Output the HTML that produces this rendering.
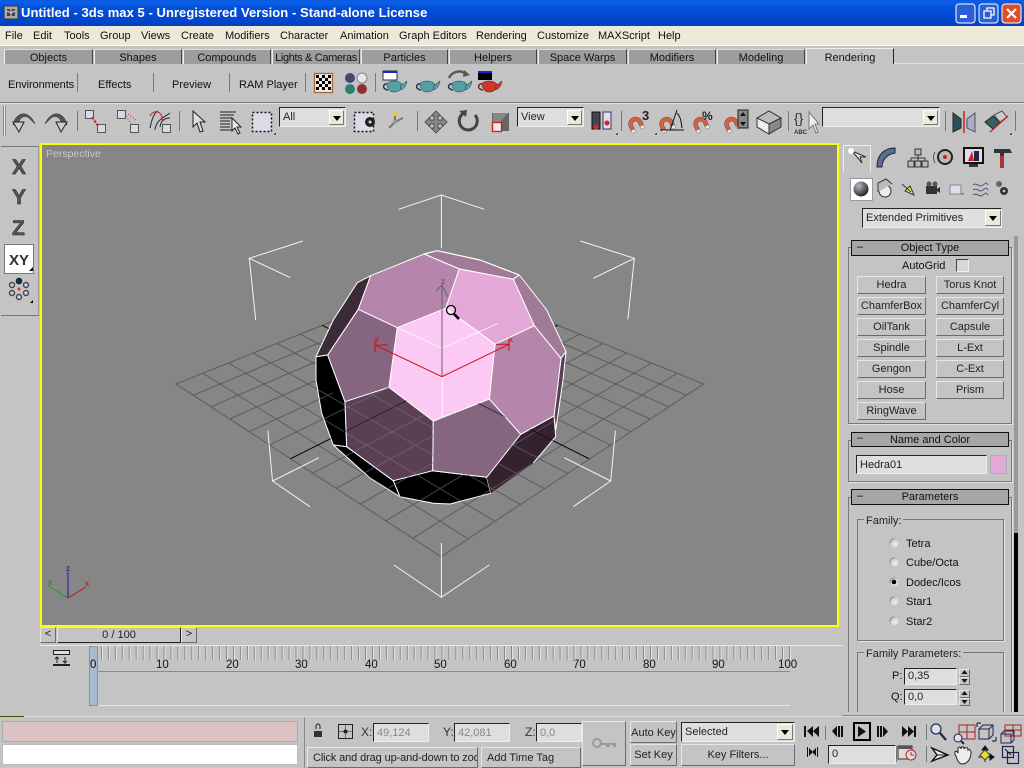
<!DOCTYPE html>
<html><head><meta charset="utf-8"><title>3ds max 5</title>
<style>
html,body{margin:0;padding:0;background:#c4c4c4}
#r{position:relative;width:1024px;height:768px;overflow:hidden;background:#c4c4c4;font:11px/14px "Liberation Sans",sans-serif;color:#111}
#r div,#r span.t{position:absolute;box-sizing:border-box;white-space:nowrap}
svg{position:absolute;left:0;top:0}
.b{background:#c4c4c4;border:1px solid;border-color:#e6e6e6 #6a6a6a #6a6a6a #e6e6e6;text-align:center;line-height:17px;color:#222}
.i{background:#dedede;border:1px solid;border-color:#222 #eee #eee #222;padding-left:3px;line-height:18px;color:#222}
.h{background:#a6a6a6;border:1px solid #111;text-align:center;line-height:15px;color:#111}
.g{border:1px solid #777;box-shadow:1px 1px 0 #e4e4e4}
.a{background:#ece9d8;border:1px solid;border-color:#fff #777 #777 #fff}
.a:after{content:"";position:absolute;left:3px;top:5px;border:4px solid transparent;border-top:5px solid #000;border-bottom:0}
.tab{background:#9d9d9d;height:15px;top:49px;text-align:center;line-height:16px;border-left:1px solid #eee;border-top:1px solid #ddd;border-right:1px solid #444;color:#111}
.lab{background:#c4c4c4;padding:0 2px;color:#222}
</style></head><body><div id="r">

<div style="left:0;top:0;width:1024px;height:26px;background:linear-gradient(#0a5ae0 0,#0a5fe8 8%,#0450d8 30%,#0348cf 70%,#0440c0 100%)"></div>
<div style="left:21px;top:5px;color:#fff;font:bold 13px/16px 'Liberation Sans',sans-serif;letter-spacing:.05px">Untitled - 3ds max 5 - Unregistered Version - Stand-alone License</div>
<div style="left:0;top:26px;width:1024px;height:20px;background:#ece9d8;border-bottom:1px solid #fff"></div>
<div style="left:5px;top:29px">File</div><div style="left:33px;top:29px">Edit</div><div style="left:64px;top:29px">Tools</div><div style="left:100px;top:29px">Group</div><div style="left:141px;top:29px">Views</div><div style="left:181px;top:29px">Create</div><div style="left:225px;top:29px">Modifiers</div><div style="left:280px;top:29px">Character</div><div style="left:340px;top:29px">Animation</div><div style="left:399px;top:29px">Graph Editors</div><div style="left:476px;top:29px">Rendering</div><div style="left:537px;top:29px">Customize</div><div style="left:598px;top:29px">MAXScript</div><div style="left:658px;top:29px">Help</div>

<div class="tab" style="left:4px;width:89px">Objects</div><div class="tab" style="left:94px;width:88px">Shapes</div><div class="tab" style="left:183px;width:88px">Compounds</div><div class="tab" style="left:272px;width:88px;letter-spacing:-.35px">Lights &amp; Cameras</div><div class="tab" style="left:361px;width:87px">Particles</div><div class="tab" style="left:449px;width:88px">Helpers</div><div class="tab" style="left:538px;width:89px">Space Warps</div><div class="tab" style="left:628px;width:88px">Modifiers</div><div class="tab" style="left:717px;width:88px">Modeling</div>
<div style="left:806px;top:48px;width:88px;height:16px;text-align:center;line-height:18px;border-left:1px solid #eee;border-top:1px solid #eee;border-right:1px solid #222;background:#c4c4c4">Rendering</div>
<div style="left:894px;top:63px;width:130px;height:1px;background:#e4e4e4"></div>

<div style="left:8px;top:78px;letter-spacing:-.1px">Environments</div><div style="left:98px;top:78px">Effects</div><div style="left:172px;top:78px">Preview</div><div style="left:239px;top:78px">RAM Player</div>
<div style="left:0;top:102px;width:1024px;height:1px;background:#777"></div>
<div style="left:0;top:103px;width:1024px;height:1px;background:#e2e2e2"></div>

<div class="i" style="left:279px;top:107px;width:67px;height:20px">All</div><div class="a" style="left:329px;top:110px;width:15px;height:15px"></div>
<div class="i" style="left:517px;top:107px;width:67px;height:20px">View</div><div class="a" style="left:567px;top:110px;width:15px;height:15px"></div>
<div class="i" style="left:822px;top:107px;width:118px;height:20px"></div><div class="a" style="left:923px;top:110px;width:15px;height:15px"></div>

<!-- left toolbar -->
<div style="left:1px;top:146px;width:38px;height:170px;border-top:1px solid #777;border-bottom:1px solid #777;border-right:1px solid #999"></div>
<div style="left:4px;top:244px;width:30px;height:30px;background:#fff;border:1px solid #777"></div>

<!-- viewport -->
<div style="left:40px;top:143px;width:799px;height:484px;background:#868686;border:2px solid #ffff00"></div>
<div style="left:46px;top:147px;color:#c8c8c8;font-size:10.5px">Perspective</div>

<!-- right panel -->
<div style="left:843px;top:145px;width:28px;height:27px;border:1px solid #eee;border-bottom:0;background:#c4c4c4"></div>
<div style="left:850px;top:178px;width:23px;height:23px;background:#fff;border:1px solid #999"></div>
<div class="i" style="left:862px;top:208px;width:140px;height:20px;background:#dedede;line-height:18px">Extended Primitives</div><div class="a" style="left:985px;top:210px;width:16px;height:16px"></div>

<div class="g" style="left:848px;top:247px;width:164px;height:177px"></div>
<div class="h" style="left:851px;top:240px;width:158px;height:16px">Object Type</div>
<div style="left:857px;top:241px;line-height:13px">&#8211;</div>
<div style="left:902px;top:259px">AutoGrid</div>
<div style="left:956px;top:259px;width:13px;height:13px;background:#d6d6d6;border:1px solid;border-color:#444 #eee #eee #444"></div>

<div class="b" style="left:857px;top:276px;width:69px;height:18px">Hedra</div><div class="b" style="left:936px;top:276px;width:68px;height:18px">Torus Knot</div>
<div class="b" style="left:857px;top:297px;width:69px;height:18px">ChamferBox</div><div class="b" style="left:936px;top:297px;width:68px;height:18px">ChamferCyl</div>
<div class="b" style="left:857px;top:318px;width:69px;height:18px">OilTank</div><div class="b" style="left:936px;top:318px;width:68px;height:18px">Capsule</div>
<div class="b" style="left:857px;top:339px;width:69px;height:18px">Spindle</div><div class="b" style="left:936px;top:339px;width:68px;height:18px">L-Ext</div>
<div class="b" style="left:857px;top:360px;width:69px;height:18px">Gengon</div><div class="b" style="left:936px;top:360px;width:68px;height:18px">C-Ext</div>
<div class="b" style="left:857px;top:381px;width:69px;height:18px">Hose</div><div class="b" style="left:936px;top:381px;width:68px;height:18px">Prism</div>
<div class="b" style="left:857px;top:402px;width:69px;height:18px">RingWave</div>

<div class="g" style="left:848px;top:440px;width:164px;height:42px"></div>
<div class="h" style="left:851px;top:432px;width:158px;height:15px;line-height:14px">Name and Color</div>
<div style="left:857px;top:432px;line-height:13px">&#8211;</div>
<div class="i" style="left:856px;top:455px;width:131px;height:19px">Hedra01</div>
<div style="left:990px;top:455px;width:17px;height:19px;background:#e4a8d8;border:1px solid #b0b0b0"></div>

<div class="g" style="left:848px;top:497px;width:164px;height:240px"></div>
<div class="h" style="left:851px;top:489px;width:158px;height:16px">Parameters</div>
<div style="left:857px;top:490px;line-height:13px">&#8211;</div>
<div class="g" style="left:857px;top:519px;width:147px;height:122px"></div>
<div class="lab" style="left:864px;top:514px">Family:</div>
<div style="left:906px;top:537px">Tetra</div><div style="left:906px;top:556px">Cube/Octa</div><div style="left:906px;top:576px">Dodec/Icos</div><div style="left:906px;top:595px">Star1</div><div style="left:906px;top:615px">Star2</div>
<div class="g" style="left:857px;top:652px;width:147px;height:80px"></div>
<div class="lab" style="left:864px;top:647px">Family Parameters:</div>
<div style="left:892px;top:669px">P:</div><div class="i" style="left:904px;top:668px;width:53px;height:17px;line-height:15px">0,35</div>
<div style="left:891px;top:690px">Q:</div><div class="i" style="left:904px;top:689px;width:53px;height:16px;line-height:15px">0,0</div>
<div class="b" style="left:959px;top:669px;width:11px;height:8px"></div><div class="b" style="left:959px;top:677px;width:11px;height:8px"></div>
<div class="b" style="left:959px;top:690px;width:11px;height:8px"></div><div class="b" style="left:959px;top:698px;width:11px;height:8px"></div>
<div style="left:1014px;top:236px;width:4px;height:297px;background:#999"></div>
<div style="left:1014px;top:533px;width:4px;height:179px;background:#000"></div>
<div style="left:843px;top:712px;width:181px;height:60px;background:#c4c4c4"></div>
<div style="left:842px;top:715px;width:182px;height:1px;background:#888"></div>

<!-- time slider -->
<div class="b" style="left:40px;top:627px;width:16px;height:16px;line-height:13px">&lt;</div>
<div class="b" style="left:57px;top:627px;width:124px;height:16px;border-right-color:#222;border-bottom-color:#222;line-height:15px">0 / 100</div>
<div class="b" style="left:181px;top:627px;width:16px;height:16px;line-height:13px">&gt;</div>
<div style="left:40px;top:645px;width:803px;height:1px;background:#e8e8e8"></div>
<div style="left:0;top:716px;width:1024px;height:1px;background:#d8d8d8"></div>
<div style="left:98px;top:671px;width:692px;height:1px;background:#8a8a8a"></div>
<div style="left:98px;top:705px;width:692px;height:1px;background:#e4e4e4"></div>
<div style="left:89px;top:646px;width:9px;height:60px;background:#a9bccd;border:1px solid #8a9098"></div>
<div style="left:90px;top:658px;font-size:11.5px">0</div>
<div style="left:156px;top:658px;font-size:11.5px">10</div><div style="left:226px;top:658px;font-size:11.5px">20</div><div style="left:295px;top:658px;font-size:11.5px">30</div><div style="left:365px;top:658px;font-size:11.5px">40</div><div style="left:434px;top:658px;font-size:11.5px">50</div><div style="left:504px;top:658px;font-size:11.5px">60</div><div style="left:573px;top:658px;font-size:11.5px">70</div><div style="left:643px;top:658px;font-size:11.5px">80</div><div style="left:712px;top:658px;font-size:11.5px">90</div><div style="left:778px;top:658px;font-size:11.5px">100</div>

<!-- status -->
<div style="left:0;top:716px;width:24px;height:1px;background:#3c5c00"></div>
<div style="left:2px;top:721px;width:296px;height:21px;background:#dcc3c3;border:1px solid #aaa"></div>
<div style="left:2px;top:744px;width:296px;height:21px;background:#fff;border:1px solid #bbb"></div>
<div style="left:304px;top:717px;width:1px;height:51px;background:#888"></div>
<div style="left:361px;top:725px;font-size:12px;color:#333">X:</div><div class="i" style="left:373px;top:723px;width:56px;height:19px;color:#888">49,124</div>
<div style="left:443px;top:725px;font-size:12px;color:#333">Y:</div><div class="i" style="left:454px;top:723px;width:56px;height:19px;color:#888">42,081</div>
<div style="left:525px;top:725px;font-size:12px;color:#333">Z:</div><div class="i" style="left:536px;top:723px;width:46px;height:19px;color:#888">0,0</div>
<div class="b" style="left:307px;top:747px;width:171px;height:21px;line-height:20px;text-align:left;padding-left:5px;overflow:hidden;letter-spacing:-.12px">Click and drag up-and-down to zoo</div>
<div class="b" style="left:481px;top:747px;width:100px;height:21px;line-height:20px;text-align:left;padding-left:5px">Add Time Tag</div>
<div class="b" style="left:582px;top:721px;width:44px;height:45px"></div>
<div class="b" style="left:630px;top:721px;width:47px;height:22px;line-height:22px">Auto Key</div>
<div class="b" style="left:630px;top:744px;width:47px;height:22px;line-height:21px">Set Key</div>
<div class="i" style="left:681px;top:722px;width:114px;height:20px;line-height:18px">Selected</div><div class="a" style="left:777px;top:724px;width:16px;height:16px"></div>
<div class="b" style="left:681px;top:744px;width:114px;height:22px;line-height:21px">Key Filters...</div>
<div class="i" style="left:828px;top:745px;width:68px;height:19px;line-height:17px">0</div>
<div style="left:853px;top:722px;width:18px;height:19px;border:2px solid #000"></div>

<svg width="1024" height="768" viewBox="0 0 1024 768">
<defs>
<g id="tp"><path d="M-7-2C-8-5-2-6 0-6S8-5 8-2C8 3 4 5 0 5S-6 3-7-2Z"/><path d="M7-2C10-3 11-5 13-6 12-2 11 2 6 3Z"/><path d="M-7-3C-10-4-11 0-10 1-8 3-7 3-6 3" fill="none" stroke-width="1.4"/></g>
<g id="mag"><path d="M-7 3V-1A7 7 0 0 1 7-1V3H3V-1A3 3 0 0 0-3-1V3Z" fill="#d8603c" stroke="#555" stroke-width=".5"/><path d="M-7 3h4v3h-4zM3 3h4v3H3z" fill="#eee" stroke="#666" stroke-width=".4"/></g>
<pattern id="tk" x="94" y="646" width="6.95" height="14" patternUnits="userSpaceOnUse"><path d="M.5 0V14" stroke="#888"/><path d="M1.5 0V14" stroke="#e4e4e4"/></pattern>
<radialGradient id="rd" cx=".65" cy=".65" r=".7"><stop offset="0" stop-color="#f0f0f0"/><stop offset=".7" stop-color="#d0d0d0"/><stop offset="1" stop-color="#777"/></radialGradient>
<radialGradient id="sp" cx=".35" cy=".3" r=".8"><stop offset="0" stop-color="#bbb"/><stop offset=".6" stop-color="#556"/><stop offset="1" stop-color="#111"/></radialGradient>
<clipPath id="lower"><path d="M316 380 345 402 389 387 433 421 489 399 521 434 554 416 556 437 533 463 491 493 450 504 433 503 400 497 370 478 333 445 322 413Z"/></clipPath>
<g id="grid" fill="none">
<path d="M193.200 395.200L458 285.200M211.100 406.800L476.600 292.700M229.700 419L495.900 300.500M249.100 431.700L515.800 308.400M269.400 444.900L536.400 316.700M312.800 473.200L579.900 334.200M336.100 488.300L602.900 343.400M360.400 504.100L626.700 353M385.900 520.800L651.500 362.900M412.700 538.300L677.200 373.200"/>
<path d="M202.800 373.200L467.300 538.300M228.500 362.900L494.100 520.800M253.300 353L519.600 504.100M277.100 343.400L543.900 488.300M300.100 334.200L567.200 473.200M343.600 316.700L610.600 444.900M364.200 308.400L630.900 431.700M384.100 300.500L650.300 419M403.400 292.700L668.900 406.800M422 285.200L686.800 395.200"/>
</g>
</defs>

<!-- window buttons -->
<g stroke="#fff"><rect x="956" y="4" width="19" height="19" rx="3" fill="#2b5fd8"/><rect x="979" y="4" width="19" height="19" rx="3" fill="#2b5fd8"/><rect x="1002" y="4" width="19" height="19" rx="3" fill="#d9502a"/></g>
<rect x="960" y="15" width="7" height="3" fill="#fff"/><path d="M984 11h7v7h-7zM987 11V8h7v7h-3" fill="none" stroke="#fff" stroke-width="1.3"/><path d="M1007 9l9 9M1016 9l-9 9" stroke="#fff" stroke-width="2.2"/>
<rect x="4" y="6" width="14" height="13" fill="#aaa" stroke="#333"/><path d="M7 9h8v7H7z" fill="#444"/><path d="M11 9v7M7 11l4 2 4-2" stroke="#ddd" fill="none"/>

<!-- separators -->
<path d="M77.500 73V92M153.500 73V92M229.500 73V92M305.500 73V92M375.500 73V92M77.500 111V131M179.500 111V131M417.500 111V131M621.500 111V131M788.500 111V131M945.500 111V131M1015.500 111V131" stroke="#777"/>
<path d="M3.500 106V136M5.500 106V136" stroke="#888"/><path d="M4.500 106V136" stroke="#eee"/>

<!-- render toolbar -->
<rect x="314.500" y="73.500" width="18" height="19" fill="#eee" stroke="#a5682a" stroke-width="1.3"/>
<path d="M316 75h3v3h-3zM322 75h3v3h-3zM328 75h3v3h-3zM319 78h3v3h-3zM325 78h3v3h-3zM316 81h3v3h-3zM322 81h3v3h-3zM328 81h3v3h-3zM319 84h3v3h-3zM325 84h3v3h-3zM316 87h3v3h-3zM322 87h3v3h-3zM328 87h3v3h-3z" fill="#000"/>
<circle cx="350" cy="78" r="5" fill="#42486e"/><circle cx="362" cy="78" r="5" fill="#e8e8e8" stroke="#888"/><circle cx="350" cy="89" r="5" fill="#2f7f70"/><circle cx="362" cy="89" r="5" fill="#902f2f"/>
<g fill="#55a0a8" stroke="#234"  stroke-width=".5"><use href="#tp" x="394" y="87"/><use href="#tp" x="427" y="87"/><use href="#tp" x="459" y="87"/></g>
<use href="#tp" x="489" y="87" fill="#c8382c" stroke="#622" stroke-width=".5"/>
<rect x="383" y="71" width="14" height="9" fill="#fff" stroke="#333"/><rect x="383" y="71" width="14" height="2" fill="#2222cc"/>
<rect x="478" y="71" width="14" height="9" fill="#000"/><rect x="478" y="71" width="14" height="2" fill="#2222cc"/>
<path d="M449 78A11 11 0 0 1 466 74" fill="none" stroke="#555" stroke-width="2.4"/><path d="M464 70l6 5-7 2z" fill="#555"/>

<!-- main toolbar -->
<path d="M13 125C15 113 28 108 35 124L30 119C25 114 20 117 18 124Z" fill="#555" stroke="#222" stroke-width=".5"/><path d="M13 122 19 132 24 122Z" fill="#ccc" stroke="#222"/>
<path d="M67 125C65 113 52 108 45 124L50 119C55 114 60 117 62 124Z" fill="#555" stroke="#222" stroke-width=".5"/><path d="M67 122 61 132 56 122Z" fill="#ccc" stroke="#222"/>
<g fill="#d8d8e8" stroke="#555"><rect x="85.500" y="110.500" width="8" height="8"/><rect x="97.500" y="124.500" width="8" height="8"/><rect x="117.500" y="110.500" width="8" height="8"/><rect x="130.500" y="124.500" width="8" height="8"/><rect x="162.500" y="124.500" width="8" height="8"/></g>
<path d="M92 117l6 9" stroke="#b33" stroke-width="2" stroke-dasharray="3 1"/><path d="M126 116l6 9M128 114l8 6" stroke="#b33" stroke-dasharray="1 2"/>
<path d="M150 128C152 118 155 112 158 111M155 130C156 120 163 118 170 113M160 127C161 120 165 118 170 118" fill="none" stroke="#224"/><path d="M150 116C154 108 164 112 162 122" fill="none" stroke="#c22"/>
<path d="M193 111V127L197 123 200 132 203 131 200 122H205Z" fill="#ddd" stroke="#222"/>
<path d="M220 112H236M220 115H234M220 118H232M220 121H230M220 124H230M220 127H230M220 130H232" stroke="#222"/><path d="M232 118V131L235 128 238 134 240 133 237 127H241Z" fill="#eee" stroke="#222"/>
<rect x="252.500" y="112.500" width="19" height="19" fill="#dcdce8" stroke="#111" stroke-width="1.500" stroke-dasharray="2 2"/>
<rect x="354.500" y="112.500" width="19" height="19" fill="#dcdce8" stroke="#111" stroke-width="1.500" stroke-dasharray="2 2"/><circle cx="370" cy="122" r="5" fill="#222"/><circle cx="370" cy="122" r="1.500" fill="#ddd"/>
<path d="M395 122 389 128M395 122 403 118M395 122V114" stroke="#777" stroke-width="2"/><circle cx="395" cy="114" r="2" fill="#e8d020"/><circle cx="395" cy="122" r="2" fill="#999"/>
<path d="M436 111 441 116H438V120H442V117L447 122 442 127V124H438V128H441L436 133 431 128H434V124H430V127L425 122 430 117V120H434V116H431Z" fill="#888" stroke="#333" stroke-width=".7"/>
<path d="M464 113A9 9 0 1 0 475 115" fill="none" stroke="#444" stroke-width="3"/><path d="M459 111l8-1-1 7z" fill="#444"/>
<path d="M492 113h17v18h-17z" fill="#666"/><path d="M493 113h15l-15 17z" fill="#888"/><rect x="492.500" y="122.500" width="9" height="9" fill="#eee" stroke="#c22" stroke-width="1.400"/>
<rect x="592" y="112" width="8" height="17" fill="#445" stroke="#111"/><rect x="603" y="112" width="8" height="17" fill="#dde" stroke="#336"/><circle cx="596" cy="127" r="2.500" fill="#d22"/><circle cx="607" cy="123" r="2.500" fill="#d22"/>
<use href="#mag" transform="translate(636 125) rotate(-25)"/><use href="#mag" transform="translate(667 125) rotate(-25)"/><use href="#mag" transform="translate(701 125) rotate(-25)"/><use href="#mag" transform="translate(732 125) rotate(-25)"/>
<text x="642" y="120" font-family="Liberation Sans" font-weight="bold" font-size="13" fill="#222">3</text>
<text x="702" y="120" font-family="Liberation Sans" font-weight="bold" font-size="12" fill="#222">%</text>
<path d="M660 130H684M670 130 677 110M677 113C681 117 681 122 682 128" stroke="#111" fill="none"/>
<path d="M738 110h10v18h-10z" fill="#888" stroke="#222"/><path d="M743 112l3 4h-6zM743 126l3-4h-6z" fill="#111"/>
<path d="M757 118 769 111 781 118 769 124Z" fill="#bbb" stroke="#333"/><path d="M757 118V127L769 134V124Z" fill="#eee" stroke="#333"/><path d="M781 118V127L769 134V124Z" fill="#888" stroke="#333"/>
<text x="794" y="123" font-family="Liberation Sans" font-size="14" fill="#333">{}</text>
<text x="794" y="134" font-family="Liberation Sans" font-weight="bold" font-size="6" fill="#333">ABC</text>
<path d="M809 112V129L813 125 816 133 818 132 815 124H819Z" fill="#eee" stroke="#777"/>
<path d="M953 113 961 119V128L953 132Z" fill="#29535c" stroke="#222"/><path d="M975 113 967 119V128L975 132Z" fill="#aac" stroke="#555"/><path d="M964 111V133" stroke="#c22" stroke-width="1.500"/>
<path d="M985 122 993 116 1000 122 993 129Z" fill="#356065" stroke="#222"/><path d="M994 115 1002 111 1007 117 1000 122Z" fill="#ccc" stroke="#555"/><path d="M990 132 1008 116" stroke="#c22" stroke-width="1.400"/>
<path d="M273 135l3-3v3zM615 135l3-3v3zM654 135l3-3v3zM1009 135l3-3v3z" fill="#000" stroke="#fff" stroke-width=".4"/>

<!-- left toolbar letters -->
<g font-family="Liberation Sans" font-weight="bold" fill="#555" stroke="#222" stroke-width=".5">
<text x="12" y="174" font-size="21">X</text><text x="12" y="204" font-size="21">Y</text><text x="12" y="235" font-size="21">Z</text></g>
<text x="9" y="265" font-family="Liberation Sans" font-weight="bold" font-size="15" fill="#333">XY</text>
<path d="M29 271l4-4v4z" fill="#000"/>
<g fill="#c8d0e0" stroke="#445" stroke-width="1.400"><circle cx="12" cy="285" r="2.500"/><circle cx="26" cy="285" r="2.500"/><circle cx="12" cy="293" r="2.500"/><circle cx="26" cy="293" r="2.500"/><circle cx="19" cy="297" r="2.500"/></g><circle cx="19" cy="281" r="2.800" fill="#134" stroke="#123"/><circle cx="19" cy="289" r="1.500" fill="#d33"/><path d="M30 303l3-3v3z" fill="#000"/>

<!-- 3d grid -->
<use href="#grid" stroke="#5c5c5c"/>
<path d="M176 384 440 278 703.600 384 441 556.700Z" fill="none" stroke="#5c5c5c"/>
<path d="M290.600 458.700 557.400 325.300M322.200 325.300 589 458.700" stroke="#000"/>

<!-- brackets -->
<path d="M398.600 209.300 441.400 195 484.300 209.300M441.400 195V248.300M302.900 241 249.300 258.300 290.400 277.700M249.300 258.300 255.700 320M580.400 241 634.300 258.300 593.200 278.300M634.300 258.300 627.900 319.300M393.900 565 441.400 597.300 489.300 565M441.400 597.300V543M319 457.700 272.500 481 310 506.700M272.500 481 267.900 430.700M564.300 457.700 610.700 481 573.200 506.700M610.700 481 615.400 430.700" fill="none" stroke="#f4f4f4"/>

<!-- polyhedron -->
<g stroke="#fff" stroke-linejoin="round">
<path d="M424 254 437.300 250.700 480 260 519.300 275 513.300 279.300 459.300 269Z" fill="#a07a96" stroke-width="1.200"/>
<path d="M513.300 279.300 519.300 275 546.700 310 566 351.700 561 358.300 534.300 325.700Z" fill="#a07a96"/>
<path d="M561 358.300 566 351.700 563 380 555.700 430 554 416Z" fill="#5b3f55"/>
<path d="M316 356.700 327.700 355 358.300 309.300 370.700 275.700 357.300 282.700 333.300 320Z" fill="#3b2a37"/>
<path d="M316 356.700 327.700 355 345 401.700 346.700 446.700 333.300 445 321.700 413.300 316 380Z" fill="#000"/>
<path d="M333.300 445 346.700 446.700 393.300 480.700 400 496.700 370 478Z" fill="#000"/>
<path d="M393.300 480.700 432.700 470.700 486.700 477.300 490.700 493.300 450 504 433.300 503.300 400 496.700Z" fill="#000"/>
<path d="M520.700 434.300 554 416 555.700 436.700 533.300 463 490.700 493.300 486.700 477.300Z" fill="#35222f" stroke="none"/>
<path d="M520.700 434.300 554 416 555.700 436.700 533.300 463" fill="none"/>
<path d="M358.300 309.300 370.700 275.700 424 254 459.300 269 445.700 308.300 397.300 327.700Z" fill="#b585ab"/>
<path d="M459.300 269 513.300 279.300 534.300 325.700 495 344.300 445.700 308.300Z" fill="#e4a8d8"/>
<path d="M534.300 325.700 561 358.300 554 416 520.700 434.300 489.300 399 495 344.300Z" fill="#b585ab"/>
<path d="M327.700 355 358.300 309.300 397.300 327.700 389 387.300 345 401.700Z" fill="#866580"/>
<path d="M389 387.300 433.300 421 432.700 470.700 393.300 480.700 346.700 446.700 345 401.700Z" fill="#5a3f55"/>
<path d="M489.300 399 520.700 434.300 486.700 477.300 432.700 470.700 433.300 421Z" fill="#866580"/>
<path d="M397.300 327.700 445.700 308.300 495 344.300 489.300 399 433.300 421 389 387.300Z" fill="#fcc8f4"/>
</g>
<path d="M397.300 327.700 442.300 348.300 498.300 323.300M442.300 376.700V418" fill="none" stroke="#fff" stroke-opacity=".75"/>
<g clip-path="url(#lower)" opacity=".55"><use href="#grid" stroke="#7a7a7a"/><path d="M290.600 458.700 557.400 325.300M322.200 325.300 589 458.700" stroke="#000"/></g>

<!-- gizmo -->
<path d="M442 376.700V285M436 291 442 285 448 297" fill="none" stroke="#666"/>
<text x="441" y="284" font-family="Liberation Sans" font-size="8" fill="#555">z</text>
<path d="M442 376.700 375 345M375 345H388M375 340V352M442 376.700 509 344.300M509 344.300H496M509 339V351" fill="none" stroke="#d01010"/>
<text x="375" y="341" font-family="Liberation Sans" font-size="8" fill="#d01010">y</text><text x="509" y="342" font-family="Liberation Sans" font-size="8" fill="#d01010">x</text>
<circle cx="451" cy="310" r="4.500" fill="#fff" fill-opacity=".4" stroke="#000" stroke-width="1.300"/><path d="M454 314 459 319" stroke="#000" stroke-width="2.600"/>

<!-- corner axes -->
<path d="M68 598 50 587" stroke="#20a020"/><path d="M68 598 86 587" stroke="#c81010"/><path d="M68 598V572" stroke="#1818a0"/>
<text x="85" y="586" font-family="Liberation Sans" font-size="8" fill="#a01010">x</text><text x="48" y="585" font-family="Liberation Sans" font-size="8" fill="#108010">y</text><text x="66" y="571" font-family="Liberation Sans" font-size="8" fill="#101070">z</text>

<!-- command tab icons -->
<path d="M852 151 862 163 860 157 866 157Z" fill="#ddd" stroke="#333"/><circle cx="851" cy="151" r="3" fill="#ffe"/>
<path d="M877 167C877 155 884 148 895 148V153C888 154 882 159 882 167Z" fill="#5a6e98" stroke="#222"/>
<path d="M915 149h6v6h-6zM908 161h6v6h-6zM915 161h6v6h-6zM922 161h6v6h-6z" fill="#bbb" stroke="#333"/><path d="M918 155V161M911 161V158H925V161" fill="none" stroke="#333"/>
<circle cx="945" cy="157" r="7" fill="#bbb" stroke="#222" stroke-width="2"/><circle cx="945" cy="157" r="2" fill="#c22"/><path d="M935 152C933 155 933 159 935 163" fill="none" stroke="#555"/>
<rect x="964" y="148" width="19" height="15" fill="#dde" stroke="#111" stroke-width="2"/><path d="M968 161 972 151 974 161Z" fill="#c22"/><path d="M974 151h5v10h-5z" fill="#224"/><rect x="969" y="164" width="9" height="3" fill="#333"/>
<path d="M994 149H1010L1012 153H1004V168H1000V153H994Z" fill="#333"/><rect x="1000" y="156" width="4" height="12" fill="#a33"/>

<!-- create row -->
<circle cx="861" cy="189" r="7.500" fill="url(#sp)"/>
<circle cx="885" cy="191" r="6" fill="#eee" stroke="#333"/><path d="M878 192V183L886 179 892 184" fill="#bbb" stroke="#333"/>
<path d="M902 184 911 192M910 186 914 195 905 191Z" fill="#ee6" stroke="#333"/>
<rect x="926" y="186" width="11" height="8" fill="#333"/><circle cx="929" cy="184" r="2.500" fill="#555"/><circle cx="935" cy="184" r="2.500" fill="#555"/><path d="M937 189l3-2v6l-3-2z" fill="#333"/>
<rect x="950" y="185" width="11" height="9" fill="#dde" stroke="#888"/><path d="M961 194h3" stroke="#c22"/>
<path d="M973 185C977 182 979 188 983 185S986 183 988 185M973 190C977 187 979 193 983 190S986 188 988 190M973 195C977 192 979 198 983 195S986 193 988 195" fill="none" stroke="#557"/>
<circle cx="1004" cy="191" r="4" fill="#333"/><circle cx="999" cy="184" r="3" fill="#666"/><circle cx="1004" cy="191" r="1.300" fill="#ccc"/>

<!-- radios -->
<g fill="url(#rd)"><circle cx="894" cy="543" r="4.500"/><circle cx="894" cy="562" r="4.500"/><circle cx="894" cy="582" r="4.500"/><circle cx="894" cy="601" r="4.500"/><circle cx="894" cy="621" r="4.500"/></g>
<circle cx="894" cy="582" r="2.300" fill="#000"/>
<path d="M964.500 670l3 4h-6zM964.500 683l3-4h-6zM964.500 691l3 4h-6zM964.500 704l3-4h-6z" fill="#111"/>

<!-- timeline -->
<rect x="98" y="646" width="693" height="14" fill="url(#tk)"/>
<rect x="53.500" y="650.500" width="16" height="4" fill="#ddd" stroke="#222"/><path d="M53 665H70" stroke="#222" stroke-width="2"/><path d="M57 657V663M55 659l2-2 2 2M65 657V663M63 661l2 2 2-2" stroke="#222" fill="none"/>

<!-- lock etc -->
<path d="M316 729v-3a2 2 0 0 1 4 0v3" fill="none" stroke="#222"/><path d="M314 731h8v6h-8z" fill="#333"/>
<rect x="338.500" y="724.500" width="14" height="14" fill="none" stroke="#222"/><circle cx="345.500" cy="731.500" r="2" fill="#222"/><path d="M345.500 725v13M339 731.500h13" stroke="#222" stroke-width=".5"/>
<circle cx="597" cy="743" r="4" fill="none" stroke="#999" stroke-width="2"/><path d="M601 743H616V747H613V745H610V747H606V745H601Z" fill="#999"/>

<!-- playback -->
<g fill="#111"><path d="M804 726h2v11h-2zM807 731l6-5v11zM813 731l6-5v11z"/><path d="M832 731l5-5v11zM838 726h2v11h-2zM841 726h2v11h-2z"/><path d="M858 726 866 731.500 858 737Z"/><path d="M877 726h2v11h-2zM880 726h2v11h-2zM883 726l5 5.500-5 5.500z"/><path d="M902 726l6 5.500-6 5.500zM908 726l6 5.500-6 5.500zM914 726h2v11h-2z"/><path d="M807 747h1v10h-1zM809 748l4 4-4 4zM816 748l-4 4 4 4zM817 747h1v10h-1z"/></g>
<path d="M825.500 726V740M926.500 724V740M896.500 746V762M926.500 746V762" stroke="#777"/>
<circle cx="936" cy="729" r="5" fill="#dde" stroke="#234" stroke-width="1.300"/><path d="M940 733 946 740" stroke="#224" stroke-width="2.200"/>
<path d="M959 725h16v14h-16zM967 725v14M959 732h16" fill="none" stroke="#a22"/><circle cx="958" cy="738" r="4" fill="#dde" stroke="#224"/><path d="M961 741l3 3" stroke="#224" stroke-width="2"/>
<rect x="979" y="729" width="10" height="10" fill="none" stroke="#225"/><path d="M979 729l4-4h10v10l-4 4M989 729l4-4" fill="none" stroke="#225"/><path d="M977 723h4M977 723v4M992 741h4M996 741v-4" stroke="#111" fill="none"/>
<path d="M1005 725h16v11h-16zM1013 725v11M1005 730h16" fill="none" stroke="#a22"/><path d="M1001 734h10v9h-10zM1001 734l3-3h10v9l-3 3" fill="none" stroke="#225"/>
<rect x="898" y="746" width="14" height="13" fill="#ddd" stroke="#333"/><circle cx="911" cy="755" r="5" fill="#ddd" stroke="#b22"/><path d="M911 752v3h3" stroke="#b22" fill="none"/><rect x="898" y="746" width="14" height="3" fill="#555"/>
<path d="M932 748 948 755 932 761 937 755Z" fill="#eee" stroke="#111" stroke-width="1.400"/><path d="M937 755H948" stroke="#111"/>
<path d="M955 754C954 750 957 751 958 753L958 749C958 746 961 747 961 749 961 746 964 746 964 749 965 747 968 747 968 750 969 749 971 750 971 752 971 758 968 764 962 764 958 764 957 758 955 754Z" fill="#eee" stroke="#222"/>
<path d="M985 746V762M978 757H994M985 746l-3 4h6zM994 757l-4-3v6z" stroke="#111" fill="#111"/><path d="M985 750 990 755 985 760 980 755Z" fill="#eee020" stroke="#444"/>
<rect x="1002.500" y="746.500" width="11" height="11" fill="none" stroke="#225" stroke-width="1.200"/><rect x="1007.500" y="752.500" width="11" height="11" fill="none" stroke="#225" stroke-width="1.200"/><path d="M1005 749l6 6" stroke="#111"/>
</svg>
</div></body></html>
